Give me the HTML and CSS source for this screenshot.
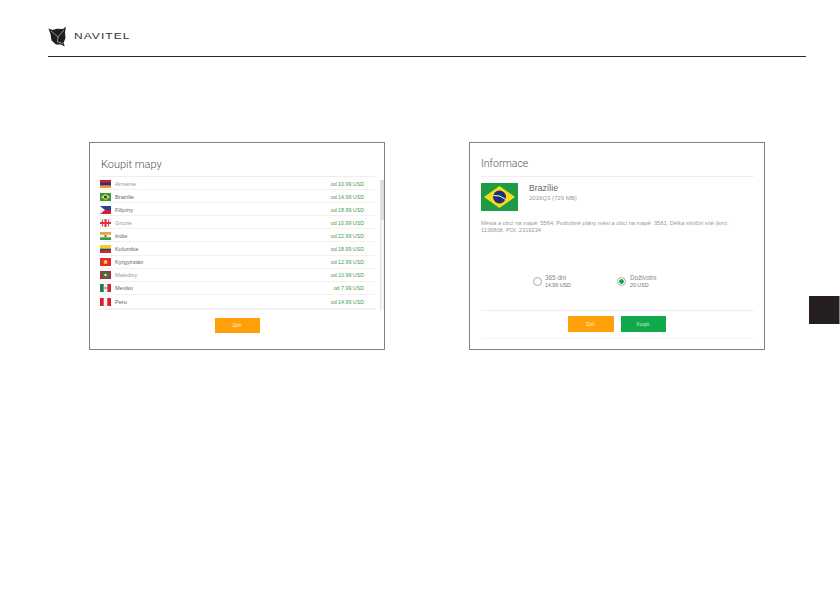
FILE: index.html
```html
<!DOCTYPE html>
<html lang="cs">
<head>
<meta charset="utf-8">
<title>Navitel</title>
<link rel="stylesheet" href="styles.css">
</head>
<body>
<div class="page">
  <header class="top">
    <svg class="logo" viewBox="0 0 19 22" width="19" height="22">
      <path d="M.5 3.500 4.500 5 9 3.800 15 4 17.800 1.500 17 8 17.500 13 15.500 18 16.800 21.500 12.800 19.500 8 19.500 3.500 15.500 2.500 9z" fill="#1f1f1f"/>
      <path d="M3 6 L10 12 L16 5 M10 12 L9.500 17 L15 18.500" stroke="#fff" stroke-width=".5" fill="none"/>
    </svg>
    <span class="brand">NAVITEL</span>
  </header>

  <main class="cards">
    <section class="card">
      <h2 class="card-title title-large">Koupit mapy</h2>
      <div class="list-wrap">
        <ul class="list">
          <li class="row"><svg class="flag" viewBox="0 0 11 8"><rect width="11" height="8" fill="#e8a020"/><rect width="11" height="5.300" fill="#2a2f8f"/><rect width="11" height="2.700" fill="#c8202c"/></svg><span class="name faint">Arménie</span><span class="price">od 10.99 USD</span></li>
          <li class="row"><svg class="flag" viewBox="0 0 11 8"><rect width="11" height="8" fill="#2f9a3c"/><path d="M5.500 1 10 4 5.500 7 1 4z" fill="#f4dc30"/><circle cx="5.500" cy="4" r="1.600" fill="#26366e"/></svg><span class="name">Brazílie</span><span class="price">od 14.99 USD</span></li>
          <li class="row"><svg class="flag" viewBox="0 0 11 8"><rect width="11" height="4" fill="#2b3f9a"/><rect y="4" width="11" height="4" fill="#d3202c"/><path d="M0 0 5 4 0 8z" fill="#f4f4f4"/></svg><span class="name">Filipíny</span><span class="price">od 18.99 USD</span></li>
          <li class="row"><svg class="flag" viewBox="0 0 11 8"><rect width="11" height="8" fill="#f6eeee"/><path d="M4.500 0h2v8h-2zM0 3h11v2H0zM2 .8h1v2H2zM8 .8h1v2H8zM2 5.200h1v2H2zM8 5.200h1v2H8z" fill="#dc3040"/></svg><span class="name faint">Gruzie</span><span class="price">od 10.99 USD</span></li>
          <li class="row"><svg class="flag" viewBox="0 0 11 8"><rect width="11" height="8" fill="#f4f2e8"/><rect width="11" height="2.700" fill="#eda03a"/><rect y="5.300" width="11" height="2.700" fill="#3c9a44"/><circle cx="5.500" cy="4" r="1" fill="#445"/></svg><span class="name">Indie</span><span class="price">od 22.99 USD</span></li>
          <li class="row"><svg class="flag" viewBox="0 0 11 8"><rect width="11" height="8" fill="#cc2a30"/><rect width="11" height="5.300" fill="#2a3f8a"/><rect width="11" height="3.700" fill="#f6d020"/></svg><span class="name">Kolumbie</span><span class="price">od 18.99 USD</span></li>
          <li class="row"><svg class="flag" viewBox="0 0 11 8"><rect width="11" height="8" fill="#e02a30"/><circle cx="5.500" cy="4" r="2" fill="#f6d030"/></svg><span class="name">Kyrgyzstán</span><span class="price">od 12.99 USD</span></li>
          <li class="row"><svg class="flag" viewBox="0 0 11 8"><rect width="11" height="8" fill="#b03038"/><rect x="2" y="1.500" width="7" height="5" fill="#2f7a40"/><circle cx="5.500" cy="4" r="1.300" fill="#d8d8c8"/></svg><span class="name faint">Maledivy</span><span class="price">od 10.99 USD</span></li>
          <li class="row"><svg class="flag" viewBox="0 0 11 8"><rect width="11" height="8" fill="#f2f2ee"/><rect width="3.700" height="8" fill="#1f7a50"/><rect x="7.300" width="3.700" height="8" fill="#d02a30"/><circle cx="5.500" cy="4" r="1" fill="#8a7a40"/></svg><span class="name">Mexiko</span><span class="price">od 7.99 USD</span></li>
          <li class="row"><svg class="flag" viewBox="0 0 11 8"><rect width="11" height="8" fill="#f4f0f0"/><rect width="3.700" height="8" fill="#d81f30"/><rect x="7.300" width="3.700" height="8" fill="#d81f30"/></svg><span class="name">Peru</span><span class="price">od 14.99 USD</span></li>
        </ul>
        <div class="scrollbar"><span class="thumb"></span></div>
      </div>
      <div class="actions actions-single">
        <button class="btn btn-orange">Zpět</button>
      </div>
    </section>

    <section class="card card-info">
      <h2 class="card-title title-small">Informace</h2>
      <div class="info-head">
        <svg class="flag-big" viewBox="0 0 37 28">
          <rect width="37" height="28" fill="#1f9a45"/>
          <path d="M18.500 3 34 14 18.500 25 3 14z" fill="#f7dc1e"/>
          <circle cx="18.500" cy="14" r="6.500" fill="#1f2f74"/>
          <path d="M12.300 12.500 Q19 11.500 24.800 16.500" stroke="#fff" stroke-width="1" fill="none"/>
        </svg>
        <div class="info-text">
          <div class="info-name">Brazílie</div>
          <div class="info-sub">2016Q3 (729 MB)</div>
        </div>
      </div>
      <p class="desc">Města a obcí na mapě: 5564, Podrobné plány měst a obcí na mapě: 3581, Délka silniční sítě (km):<br>1139808, POI: 2319234</p>
      <div class="plans">
        <div class="plan">
          <span class="radio"></span>
          <div><div class="plan-name">365 dní</div><div class="plan-price">14.99 USD</div></div>
        </div>
        <div class="plan plan-on">
          <span class="radio radio-on"></span>
          <div><div class="plan-name">Doživotní</div><div class="plan-price">20 USD</div></div>
        </div>
      </div>
      <div class="actions actions-double">
        <button class="btn btn-orange">Zpět</button>
        <button class="btn btn-green">Koupit</button>
      </div>
      <div class="foot-line"></div>
    </section>
  </main>

  <div class="side-tab"></div>
</div>
</body>
</html>
```

FILE: styles.css
```css
* { box-sizing: border-box; }
html, body { margin: 0; padding: 0; background: #fff; }
.page {
  position: relative;
  width: 840px;
  height: 595px;
  overflow: hidden;
  font-family: "Liberation Sans", Arial, sans-serif;
}
.top {
  display: flex;
  align-items: center;
  gap: 7px;
  height: 57px;
  margin: 0 34px 0 48px;
  padding-top: 21px;
  padding-bottom: 6px;
  border-bottom: 1px solid #2a2a2a;
}
.logo { display: block; flex: none; }
.brand {
  font-size: 9px;
  letter-spacing: .8px;
  color: #333;
  transform: scaleX(1.33);
  transform-origin: left center;
}
.cards {
  display: flex;
  gap: 84px;
  padding: 85px 0 0 89px;
}
.card {
  width: 296px;
  height: 208px;
  border: 1px solid #808080;
  background: #fff;
}
.card-title {
  display: flex;
  align-items: center;
  margin: 0;
  font-family: Roboto, "Liberation Sans", sans-serif;
  font-weight: 300;
  color: #555;
}
.title-large { height: 33px; padding: 9px 0 0 11px; font-size: 11px; }
.title-small { height: 34px; padding-top: 7px; font-size: 10.500px; border-bottom: 1px solid #eee; }
.list-wrap { display: flex; margin-left: 9px; }
.list {
  width: 276px;
  height: 134px;
  margin: 0 5px 0 0;
  padding: 0;
  list-style: none;
  border-top: 1px solid #eee;
  border-bottom: 2px solid #f0f0f0;
}
.row {
  display: flex;
  align-items: center;
  height: 13.100px;
  padding: 1px 11px 0 1px;
  border-bottom: 1px solid #f1f1f1;
  font-size: 5.300px;
  color: #666;
}
.row:last-child { border-bottom: 0; }
.flag { flex: none; width: 11px; height: 8px; margin-right: 4px; }
.name { flex: 1; font-size: 5.700px; }
.faint { color: #999; }
.price { color: #3f9a50; }
.scrollbar {
  width: 4px;
  height: 130px;
  margin-top: 4px;
  background: #f4f4f4;
  border-left: 1px solid #e4e4e4;
}
.thumb { display: block; height: 40px; background: #dcdcdc; }
.actions { display: flex; justify-content: center; gap: 7px; }
.actions-single { margin-top: 8px; }
.btn {
  width: 45px;
  height: 15px;
  padding: 0;
  border: 0;
  font: 4.500px "Liberation Sans", Arial, sans-serif;
  color: rgba(255, 255, 255, .8);
}
.btn-orange { background: #ff9f0a; }
.btn-green { background: #0fa84a; }
.card-info { padding: 0 10px 0 11px; }
.info-head { display: flex; gap: 11px; margin-top: 6px; }
.flag-big { display: block; flex: none; width: 37px; height: 28px; }
.info-name { font-size: 8.700px; line-height: 10px; color: #666; }
.info-sub { margin-top: 1px; font-size: 6px; line-height: 8px; color: #999; }
.desc {
  margin: 9px 0 0;
  font-size: 5.700px;
  line-height: 7px;
  color: #999;
  white-space: nowrap;
}
.plans {
  display: flex;
  height: 37px;
  margin-top: 39px;
  padding: 0 0 0 52px;
}
.plan { display: flex; align-items: center; width: 84px; height: 16px; gap: 3px; }
.plan-on { gap: 4px; }
.radio {
  flex: none;
  width: 9px;
  height: 9px;
  border: 1px solid #aaa;
  border-radius: 50%;
  background: #fff;
}
.radio-on { background: radial-gradient(circle, #0fa84a 0 2px, #fff 2.500px); }
.plan-name { font-size: 6.400px; line-height: 8px; color: #888; }
.plan-price { font-size: 5.300px; line-height: 7px; color: #777; }
.actions-double {
  padding: 5px 2px 0 0;
  border-top: 1px solid #eee;
}
.actions-double .btn { height: 16px; }
.actions-double .btn-orange { width: 46px; }
.foot-line { margin-top: 6px; border-top: 1px solid #f6f6f6; }
.side-tab {
  position: absolute;
  left: 809px;
  top: 296px;
  width: 31px;
  height: 28px;
  background: #261f1f;
  border-right: 1px solid #888;
}
```
